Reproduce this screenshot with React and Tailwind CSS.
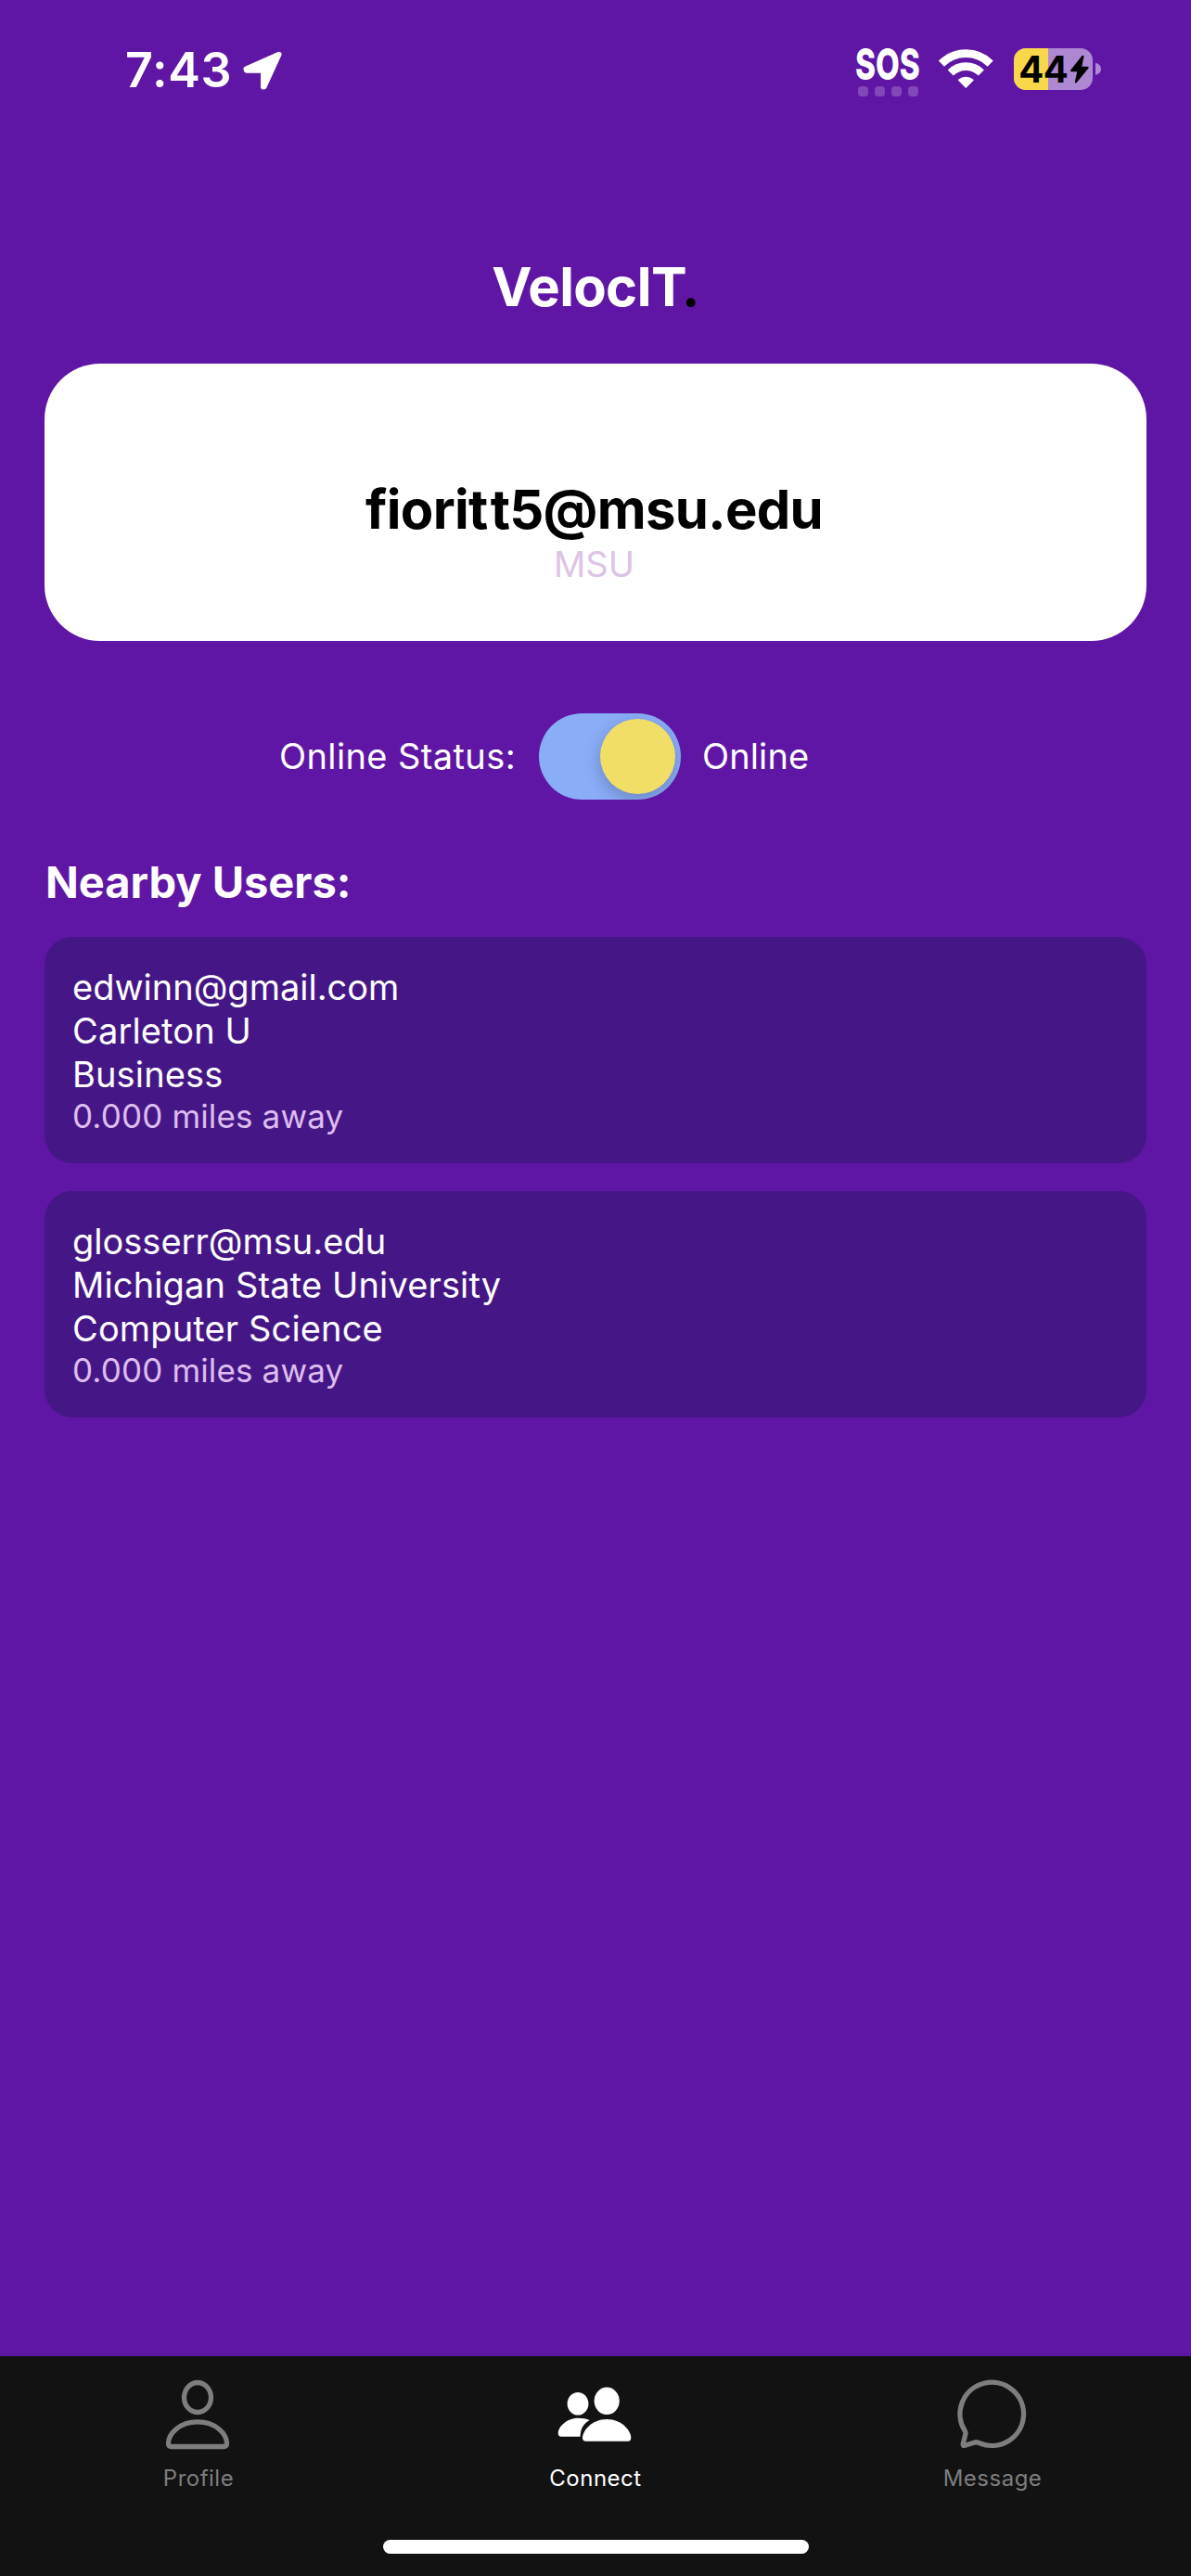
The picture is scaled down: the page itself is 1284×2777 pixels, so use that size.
import React, { useState } from 'react';

const nearbyUsers = [
  { email: 'edwinn@gmail.com', school: 'Carleton U', major: 'Business', distance: 0 },
  { email: 'glosserr@msu.edu', school: 'Michigan State University', major: 'Computer Science', distance: 0 },
];

const LocationArrow = () => (
  <svg width="43" height="43" viewBox="0 0 43 43" fill="currentColor" stroke="currentColor" strokeWidth="5.5" strokeLinejoin="round">
    <path d="M38.8 3.6 L3.2 19.2 L3.6 20.9 H21.8 V38.8 L22.8 38.6 Z" />
  </svg>
);

const SosSignal = () => (
  <div className="h-[56px] w-[76px]">
    <div className="h-[43px] pl-[2px]">
      <span className="inline-block origin-left scale-x-[0.71] text-[47px] leading-[37px] font-extrabold">SOS</span>
    </div>
    <div className="flex gap-[7px] pl-[5px]">
      {[1, 2, 3, 4].map((dot) => (
        <span key={dot} className="size-[11px] rounded-[4px] bg-[#8148b9]" />
      ))}
    </div>
  </div>
);

const WifiIcon = () => (
  <svg width="64" height="50" viewBox="0 0 64 50" fill="none" stroke="white" strokeWidth="8.6">
    <path d="M4.9 18.6 A37.3 37.3 0 0 1 57.7 18.6" />
    <path d="M14.8 28.5 A23.3 23.3 0 0 1 47.8 28.5" />
    <path d="M23.6 36.3 A11.8 11.8 0 0 1 39 36.3 L31.3 44 Z" fill="white" strokeWidth="1.5" strokeLinejoin="round" />
  </svg>
);

const BatteryIcon = () => (
  <svg width="100" height="50" viewBox="0 0 100 50">
    <clipPath id="battery">
      <rect x="3" y="2" width="85" height="45" rx="13" />
    </clipPath>
    <g clipPath="url(#battery)">
      <rect width="100" height="50" fill="#ae88d3" />
      <rect width="40" height="50" fill="#f8d74a" />
    </g>
    <path d="M91 17.7 Q97 19.5 97 24.3 Q97 29.2 91 31 Z" fill="#ae88d3" />
    <text x="8.2" y="39.3" fill="black" fontFamily="Inter, sans-serif" fontWeight="700" fontSize="40" letterSpacing="-0.4">
      44
    </text>
    <path
      d="M77.4 10.8 L65.1 26.2 H72.6 L69.9 38.4 L82.6 22.8 H75 Z"
      fill="black"
      stroke="black"
      strokeWidth="2.2"
      strokeLinejoin="round"
    />
  </svg>
);

const ProfileIcon = () => (
  <svg width="80" height="80" viewBox="0 0 80 80" fill="none" stroke="currentColor" strokeWidth="5.3" strokeLinejoin="round">
    <ellipse cx="39" cy="21.5" rx="14.5" ry="16" />
    <path d="M11 74.5 H67 Q70.5 74.5 70.5 71 C70.5 61 59 47.8 39 47.8 S7.5 61 7.5 71 Q7.5 74.5 11 74.5 Z" />
  </svg>
);

const PeopleIcon = () => (
  <svg width="80" height="80" viewBox="0 0 80 80" fill="currentColor" className="overflow-visible">
    <ellipse cx="21" cy="28.3" rx="11.4" ry="12.3" />
    <ellipse cx="52.2" cy="25.3" rx="13.6" ry="14.7" />
    <path d="M33.7 46 C25.5 50.5 24 57 23.5 63.7 H3 Q-0.3 63.7 -0.3 60 C-0.3 54 8 43.7 21.5 43.7 C26 43.7 30.5 44.5 33.7 46 Z" />
    <path d="M29.5 68.7 H75 Q78.3 68.7 78.3 65 C78.3 58 69 45 52.2 45 S26 58 26 65 Q26 68.7 29.5 68.7 Z" />
  </svg>
);

const BubbleIcon = () => (
  <svg width="80" height="80" viewBox="0 0 80 80" fill="none" stroke="currentColor" strokeWidth="5.3" strokeLinejoin="round">
    <path d="M10.2 57.5 A34.3 34.1 0 1 1 26.5 71 Q23.3 69 20 70.3 L10.3 73.3 Q7.6 74 8.2 71.5 L10.9 61 Q11.2 59 10.2 57.5 Z" />
  </svg>
);

const tabs = [
  { id: 'profile', label: 'Profile', Icon: ProfileIcon },
  { id: 'connect', label: 'Connect', Icon: PeopleIcon },
  { id: 'message', label: 'Message', Icon: BubbleIcon },
];

const StatusBar = () => (
  <div className="flex h-[274px] items-start justify-between pl-[135px] pr-[94px]">
    <div className="flex pt-[46px]">
      <span className="text-[52px] leading-[60px] font-semibold tracking-[0.7px]">7:43</span>
      <div className="ml-3 mt-[9px]">
        <LocationArrow />
      </div>
    </div>
    <div className="flex items-start pt-[50px]">
      <SosSignal />
      <div className="ml-[14px] mr-[16px]">
        <WifiIcon />
      </div>
      <BatteryIcon />
    </div>
  </div>
);

const UserCard = ({ user }) => (
  <div className="rounded-[30px] bg-[#451786] px-[30px] pt-[31px] pb-[30px] text-[38px] leading-[47px]">
    <p>{user.email}</p>
    <p className="tracking-[0.14px]">{user.school}</p>
    <p className="tracking-[0.14px]">{user.major}</p>
    <p className="text-[35px] leading-[42px] tracking-[0.15px] text-[#debdf0]">{user.distance.toFixed(3)} miles away</p>
  </div>
);

export default function App() {
  const [online, setOnline] = useState(true);
  const [activeTab, setActiveTab] = useState('connect');

  return (
    <div className="flex h-[2777px] w-[1284px] flex-col overflow-hidden bg-[#6016a5] font-['Inter',sans-serif] text-white">
      <StatusBar />

      <main className="flex-1 px-12">
        <h1 className="text-center text-[58px] leading-[70px] font-bold tracking-[-0.7px]">
          VelocIT<span className="-ml-[5px] text-black">.</span>
        </h1>

        {/* Current user */}
        <div className="mt-12 h-[299px] rounded-[60px] bg-white pt-[122px] pr-[3px] text-center">
          <p className="text-[58px] leading-[70px] font-bold tracking-[-0.7px] text-black">
            fiorit<span className="ml-[3px]">t5@msu.edu</span>
          </p>
          <p className="mt-[2px] text-[38px] leading-[45px] text-[#dcc4e4]">MSU</p>
        </div>

        {/* Online toggle */}
        <div className="mt-[78px] flex items-center pl-[253px] text-[38px] leading-[46px]">
          <span className="-mt-[2px] tracking-[0.4px]">Online Status:</span>
          <button
            onClick={() => setOnline(!online)}
            className={`ml-[25px] mr-[23px] flex h-[93px] w-[153px] items-center overflow-hidden rounded-full px-1.5 ${online ? 'justify-end bg-[#8aadf8]' : 'justify-start bg-gray-500'}`}
          >
            <span className="size-[81px] rounded-full bg-[#f0de66] shadow-[0_6px_18px_rgba(0,0,0,0.22)]" />
          </button>
          <span className="-mt-[2px] tracking-[0.1px]">{online ? 'Online' : 'Offline'}</span>
        </div>

        {/* Nearby users */}
        <h2 className="mt-[61px] pl-px text-[47px] leading-[56px] font-bold">Nearby Users:</h2>
        <div className="mt-[31px] flex flex-col gap-[30px]">
          {nearbyUsers.map((user) => (
            <UserCard key={user.email} user={user} />
          ))}
        </div>
      </main>

      <nav className="flex h-[237px] flex-col items-center bg-[#121212]">
        <div className="grid w-full grid-cols-3">
          {tabs.map(({ id, label, Icon }) => (
            <button
              key={id}
              onClick={() => setActiveTab(id)}
              className={`flex flex-col items-center pt-[23px] ${activeTab === id ? 'text-white' : 'text-[#7e7e80]'}`}
            >
              <Icon />
              <span className="mt-[14px] text-[24px] leading-[30px] tracking-[0.5px]">{label}</span>
            </button>
          ))}
        </div>
        <div className="mt-[51px] h-[15px] w-[459px] rounded-full bg-white" />
      </nav>
    </div>
  );
}
